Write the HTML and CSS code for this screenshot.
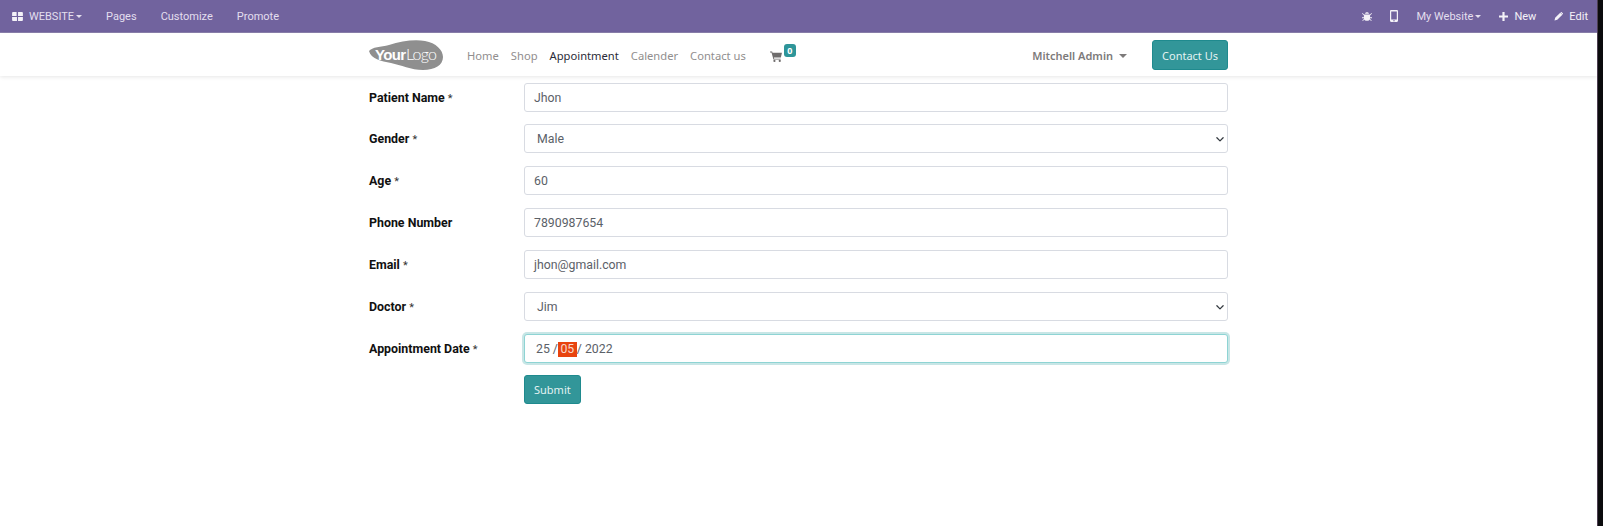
FILE: index.html
```html
<!DOCTYPE html>
<html lang="en">
<head>
    <meta charset="UTF-8">
    <title>Appointment</title>
    <link rel="stylesheet" href="styles.css">
</head>
<body>
    <div class="page">
        <div class="topbar">
            <div class="topbar-left">
                <a class="bar-item bar-brand">
                    <svg class="bar-icon" viewBox="0 0 12 10" width="11" height="9"><path d="M0 1a1 1 0 0 1 1-1h4v4.400H0zM6.600 0H11a1 1 0 0 1 1 1v3.400H6.600zM0 5.600h5.400V10H1a1 1 0 0 1-1-1zM6.600 5.600H12V9a1 1 0 0 1-1 1H6.600z"/></svg>
                    <span>WEBSITE<span class="caret"></span></span>
                </a>
                <a class="bar-item">Pages</a>
                <a class="bar-item">Customize</a>
                <a class="bar-item">Promote</a>
            </div>
            <div class="topbar-right">
                <a class="bar-icon-btn">
                    <svg viewBox="0 0 12 12" width="10" height="11"><path d="M3.600 2.600C4 1.300 5 .8 6 .8s2 .5 2.400 1.800zM2.800 3.600h6.400c.3 0 .5.200.5.500V8c0 2-1.600 3.200-3.700 3.200S2.300 10 2.300 8V4.100c0-.3.200-.5.500-.5zM0 2.500l.7-.7 2 2-.7.700zM12 2.500l-.7-.7-2 2 .7.700zM0 7h2.300v1H0zM9.700 7H12v1H9.700zM.3 10.800l2-1.800.7.700-2 1.800zM11.700 10.800l-2-1.800-.7.700 2 1.800z"/></svg>
                </a>
                <a class="bar-icon-btn">
                    <svg viewBox="0 0 8 12" width="8" height="12"><path fill-rule="evenodd" d="M1.200 0h5.600C7.500 0 8 .5 8 1.200v9.600C8 11.500 7.500 12 6.800 12H1.200C.5 12 0 11.500 0 10.800V1.200C0 .5.500 0 1.200 0zM1.200 1.500v8h5.600v-8zM4 10a.7.7 0 1 0 0 1.400A.7.7 0 0 0 4 10z"/></svg>
                </a>
                <a class="bar-item">My Website<span class="caret"></span></a>
                <a class="bar-item bar-strong">
                    <svg viewBox="0 0 10 10" width="9" height="9"><path d="M3.800 0h2.400v3.800H10v2.400H6.200V10H3.800V6.200H0V3.800h3.800z"/></svg>
                    New
                </a>
                <a class="bar-item bar-strong">
                    <svg viewBox="0 0 11 11" width="9" height="9"><path d="M7.600.8 10.200 3.400 4 9.600 0.600 10.400 1.400 7zM8.300.2c.3-.3.800-.3 1.100 0l1.400 1.400c.3.300.3.800 0 1.100l-.3.300-2.500-2.500z"/></svg>
                    Edit
                </a>
            </div>
        </div>

        <header class="navbar">
            <div class="navbar-inner">
                <svg class="logo" viewBox="0 0 74 30" width="74" height="30">
                    <path d="M0 11C3 7 12 7 20 5 32 1 46-1 56 1 67 3 74 10 74 17 74 25 66 30 54 30 42 30 32 25 22 23 12 21 2 19 0 11z" fill="#8f8f8f"/>
                    <text x="6" y="20" class="logo-your" textLength="31">Your</text>
                    <text x="37" y="20" class="logo-logo" textLength="31">Logo</text>
                </svg>
                <nav class="menu">
                    <a>Home</a>
                    <a>Shop</a>
                    <a class="active">Appointment</a>
                    <a>Calender</a>
                    <a>Contact us</a>
                </nav>
                <a class="cart">
                    <svg viewBox="0 0 13 12" width="12" height="11"><path d="M0 .5h2.300l.4 1.500H13l-1.200 5.200H4.200l.3 1.200h7.100v1H3.700L1.600 1.500H0z"/><circle cx="4.800" cy="10.800" r="1.200"/><circle cx="10.600" cy="10.800" r="1.200"/></svg>
                    <span class="badge">0</span>
                </a>
                <a class="user">Mitchell Admin<span class="caret"></span></a>
                <a class="btn">Contact Us</a>
            </div>
        </header>

        <main class="content">
            <form class="form">
                <label class="row">
                    <span class="label">Patient Name <i>*</i></span>
                    <span class="field">Jhon</span>
                </label>
                <label class="row">
                    <span class="label">Gender <i>*</i></span>
                    <span class="field field-select">Male<svg class="chevron" viewBox="0 0 16 16" width="10" height="10"><path d="m3 6 5 5 5-5" fill="none" stroke="#343a40" stroke-width="2" stroke-linecap="round" stroke-linejoin="round"/></svg></span>
                </label>
                <label class="row">
                    <span class="label">Age <i>*</i></span>
                    <span class="field">60</span>
                </label>
                <label class="row">
                    <span class="label">Phone Number</span>
                    <span class="field">7890987654</span>
                </label>
                <label class="row">
                    <span class="label">Email <i>*</i></span>
                    <span class="field">jhon@gmail.com</span>
                </label>
                <label class="row">
                    <span class="label">Doctor <i>*</i></span>
                    <span class="field field-select">Jim<svg class="chevron" viewBox="0 0 16 16" width="10" height="10"><path d="m3 6 5 5 5-5" fill="none" stroke="#343a40" stroke-width="2" stroke-linecap="round" stroke-linejoin="round"/></svg></span>
                </label>
                <label class="row">
                    <span class="label">Appointment Date <i>*</i></span>
                    <span class="field field-focus field-date">25 /<span class="date-part">05</span>/ 2022</span>
                </label>
                <div class="row">
                    <span class="label"></span>
                    <a class="btn btn-submit">Submit</a>
                </div>
            </form>
        </main>
    </div>
    <div class="edge"></div>
</body>
</html>
```

FILE: styles.css
```css
html, body {
    height: 100%;
}

body {
    display: flex;
    margin: 0;
    background-color: #fff;
    font-family: Roboto, sans-serif;
    font-size: 12.3px;
    color: #5b6168;
    overflow: hidden;
}

a {
    text-decoration: none;
}

.page {
    flex: 1;
    min-width: 0;
}

.edge {
    flex: 0 0 5px;
    background-color: #0b0b0d;
    border-left: 1px solid #4d3f52;
}

.topbar {
    display: flex;
    justify-content: space-between;
    height: 33px;
    background-color: #71639e;
    border-bottom: 1px solid #8b80ad;
    box-sizing: border-box;
    font-size: 11px;
    color: #e3dfee;
}

.topbar-left,
.topbar-right {
    display: flex;
    align-items: center;
}

.topbar-left {
    padding-left: 12px;
    gap: 24px;
}

.topbar-right {
    gap: 18px;
    padding-right: 9px;
}

.bar-item {
    display: flex;
    align-items: center;
}

.bar-brand {
    gap: 6px;
}

.bar-item svg,
.bar-icon-btn svg {
    fill: #f4f2f8;
    display: block;
}

.bar-strong {
    gap: 6px;
    color: #f4f2f8;
}

.caret {
    display: inline-block;
    margin-left: 2px;
    vertical-align: 2px;
    border-top: 3px solid currentColor;
    border-left: 3px solid transparent;
    border-right: 3px solid transparent;
}

.navbar {
    height: 43px;
    background-color: #fff;
    box-shadow: 0 1px 4px rgba(0, 0, 0, 0.1);
}

.navbar-inner {
    display: flex;
    align-items: center;
    width: 859px;
    height: 100%;
    margin-left: 369px;
    font-family: "Noto Sans", sans-serif;
    font-size: 11.2px;
}

.logo {
    flex-shrink: 0;
}

.logo-your {
    font-family: "Liberation Sans", sans-serif;
    font-size: 15px;
    font-weight: bold;
    fill: #fff;
}

.logo-logo {
    font-family: Lato, sans-serif;
    font-size: 16px;
    font-weight: 300;
    fill: #fff;
}

.menu {
    display: flex;
    gap: 12px;
    margin-left: 24px;
    margin-top: 2px;
    color: #918e8e;
}

.menu .active {
    color: #2b2b38;
}

.cart {
    display: flex;
    align-items: flex-start;
    margin-left: 24px;
    margin-top: -3px;
}

.cart svg {
    fill: #6f6c6c;
    margin-top: 7px;
}

.badge {
    display: block;
    box-sizing: border-box;
    width: 12px;
    margin-left: 2px;
    height: 13px;
    line-height: 13px;
    text-align: center;
    border-radius: 3px;
    background-color: #2e9599;
    color: #fff;
    font-size: 9px;
    font-weight: 700;
}

.user {
    margin-left: auto;
    margin-top: 2px;
    font-size: 11px;
    font-weight: 600;
    color: #7d7a7a;
}

.user .caret {
    margin-left: 6px;
    vertical-align: 2px;
    border-top-width: 4px;
    border-left-width: 4px;
    border-right-width: 4px;
}

.btn {
    display: block;
    box-sizing: border-box;
    height: 29px;
    line-height: 28px;
    padding: 0 9px;
    background-color: #329699;
    border: 1px solid #1f8a8e;
    border-radius: 3px;
    color: #e3f2f2;
    font-family: "Noto Sans", sans-serif;
    font-size: 11px;
}

.navbar .btn {
    height: 30px;
    line-height: 29px;
    margin-left: 25px;
}

.content {
    width: 859px;
    margin: 6.6px 0 0 369px;
}

.form {
    display: flex;
    flex-direction: column;
    gap: 12.83px;
}

.row {
    display: flex;
    align-items: center;
}

.label {
    flex: 0 0 155px;
    color: #111;
    font-weight: 700;
    font-size: 12.4px;
}

.label i {
    font-style: normal;
    font-weight: 400;
    font-size: 11px;
    color: #333;
}

.field {
    position: relative;
    flex: 1;
    display: block;
    box-sizing: border-box;
    height: 29px;
    line-height: 28px;
    padding: 0 9px;
    background-color: #fff;
    border: 1px solid #d8dbe2;
    border-radius: 3px;
}

.field-select {
    padding-left: 12px;
}

.chevron {
    position: absolute;
    top: 9px;
    right: 2px;
}

.field-date {
    padding-left: 11px;
}

.field-focus {
    border-color: #8ed4d4;
    box-shadow: 0 0 0 2px #c8e6e6;
}

.date-part {
    display: inline-block;
    padding: 0 2.5px;
    line-height: 15px;
    background-color: #e8440f;
    color: #f6d9cd;
}

.btn-submit {
    flex: 0 0 auto;
}
```
